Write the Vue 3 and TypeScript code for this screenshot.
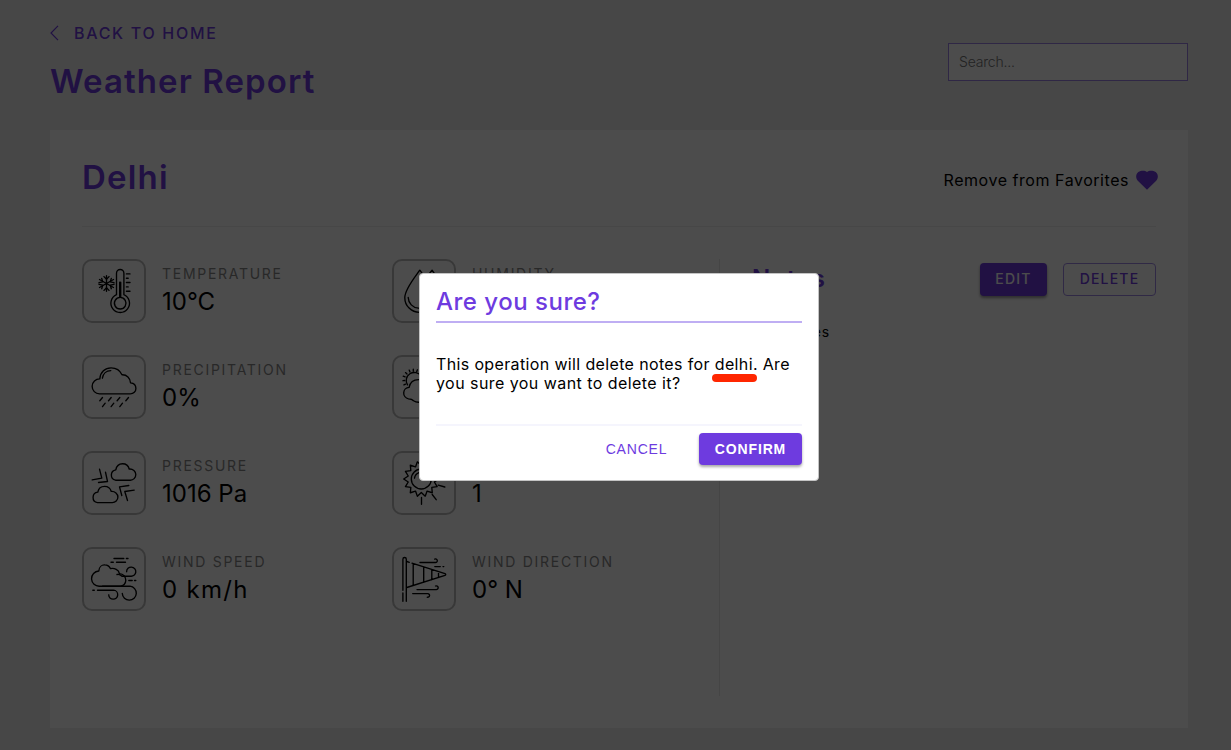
<script setup lang="ts">
interface Stat {
  key: string
  label: string
  value: string
  tracking?: number
  icon: string[]
}

function burst(cx: number, cy: number, outer: number, inner: number, points: number): string {
  const parts: string[] = []
  for (let i = 0; i < points * 2; i++) {
    const r = i % 2 === 0 ? outer : inner
    const a = (Math.PI * i) / points + Math.PI
    parts.push(`${(cx + r * Math.cos(a)).toFixed(2)} ${(cy + r * Math.sin(a)).toFixed(2)}`)
  }
  return `M${parts.join('L')}Z`
}

const stats: Stat[] = [
  {
    key: 'temperature',
    label: 'TEMPERATURE',
    value: '10°C',
    icon: [
      'M34 35.5V14a3.7 3.7 0 0 1 7.4 0v21.5a9.3 9.3 0 1 1-7.4 0Z',
      'M37.7 38.2a5.8 5.8 0 1 0 .01 0M37.2 23v15M38.2 23v15',
      'M43.9 14.7h3.6M43.9 19h1.8M43.9 23.3h3.6M43.9 27.700h1.800M43.900 32h3.600',
      'M24 16.500v15.600M17 20.300l14 8M17 28.300l14-8',
      'M21.500 17.400l2.500 2.600 2.500-2.600M21.500 31.200l2.500-2.600 2.500 2.600M16.500 23.500l3.700-.8-1-3.500M31.500 25.100l-3.700.9 1 3.500M19.200 29.500l1-3.500-3.700-.9M28.800 19.200l-1 3.500 3.700.8',
    ],
  },
  {
    key: 'humidity',
    label: 'HUMIDITY',
    value: '54%',
    icon: [
      'M27.300 11C22 18.500 12.300 30 12.300 38.500a14.700 14.700 0 0 0 29.400 0C41.700 30 33 18.500 27.300 11Z',
      'M15.700 38.300A11 11 0 0 0 26 49',
      'M36 15.500L39.600 11l4 6',
    ],
  },
  {
    key: 'precipitation',
    label: 'PRECIPITATION',
    value: '0%',
    icon: [
      'M17 38.700a7.500 7.500 0 0 1 .3-15C17.800 17 22.600 12.600 28.600 12.600c5 0 9 2.700 10.900 7 4.800-.2 8.300 3.300 8.500 8 3.300.3 5.400 2.700 5.400 5.600 0 3.100-2.400 5.500-5.600 5.500Z',
      'M19.900 23C20.500 18.500 24 15.500 28.300 15.400',
      'M20 42.300l-2.700 3.200M28.700 42.300L26 45.500M37.300 42.300l-2.700 3.200M46 42.300l-2.700 3.200M22.700 48l-2.700 3.400M31.300 48l-2.700 3.400M40 48l-2.700 3.400',
    ],
  },
  {
    key: 'cloud',
    label: 'CLOUD COVER',
    value: '0%',
    icon: [
      'M15 29.700a8 8 0 1 1 13.500-8.700',
      'M12.300 25.300l-1.800.2M12.600 21.700l-1.900-.7M14.500 18.800l-1.500-1.400M17.500 16.800l-.8-1.900M20.800 16v-2M24.200 16.500l.7-1.900M27 18.300l1.300-1.500M13 28.900l-1.600.8',
      'M21 45.500c-1.500-1.800-3.500-1.900-5-1.900a5.800 5.800 0 0 1 .6-11.500c1-4.800 4.400-7.600 9.400-7.600s9 3 10 7c5 0 9 3 9 8s-4 7.500-8 7.500H26c-2 0-3.500-.5-5-1.500Z',
    ],
  },
  {
    key: 'pressure',
    label: 'PRESSURE',
    value: '1016 Pa',
    icon: [
      'M33 29a5.300 5.300 0 0 1 .3-10.400c.7-3.600 3.300-6.100 6.700-6.100 3.500 0 6 2.200 6.700 5.300 3.800-.3 6.600 2.300 6.600 5.600S50.800 29 47.800 29Z',
      'M15 51.400a5.300 5.300 0 0 1 .3-10.500c.7-3.600 3.300-5.800 6.700-5.800 3.500 0 6 2.200 6.700 5.100 3.800-.3 6.700 2.400 6.700 5.600s-2.600 5.600-5.600 5.600Z',
      'M9.700 28.700l9.600-1.700L17 18M16 31.300l9-1L23 21M39.300 44.300L37 35.700l9.300-1.400M45 49.300l-2.700-9 9.400-1.300',
    ],
  },
  {
    key: 'uv',
    label: 'UV INDEX',
    value: '1',
    icon: [
      burst(28.8, 27.8, 17.6, 13.4, 14),
      'M38.800 27.800a10 10 0 1 1-20 0a10 10 0 1 1 20 0M22 27a7 7 0 0 1 4.500-5.600',
      'M45.700 34l6.600 1.800M39.700 43.300l4 5.200M29 46.300v6.700',
    ],
  },
  {
    key: 'wind-speed',
    label: 'WIND SPEED',
    value: '0 km/h',
    tracking: 1.3,
    icon: [
      'M17 39a7.600 7.600 0 0 1-.7-15.200c.3-4 3-6.300 6-6.100 2.600.1 4.600 1.400 5.600 3.700 4-.8 8.500 1 9 5 4 .3 6.400 3.400 6.400 6.600 0 3.500-2.500 6-5.600 6Z',
      'M34.500 27.300c2-.5 3.500.2 5 1.700h8.500a4.600 4.600 0 1 0-3.900-4.500',
      'M20 39h27.500a7 7 0 1 1-7.700 7.300M15 43h16a4.500 4.500 0 1 1-4.800 4.600M10.300 43h1.500',
      'M46.300 33.300h3.400M52 33.300h1.300M31.500 11.300h9.800M43.900 11.300h1.600M28.500 15h2.300M34 15h9',
    ],
  },
  {
    key: 'wind-direction',
    label: 'WIND DIRECTION',
    value: '0° N',
    icon: [
      'M10.400 43V12a1.700 1.700 0 0 1 3.400 0v42M10.400 45.800V54',
      'M14.300 14.300l2.500.8M19.500 16l33 10.500q1.500.8 0 1.600L14.300 40.300M20.700 16.500v21.500M31.200 19.700v15.300M39.300 22.300v10.200M46 24.500v5.800',
      'M27.500 15.300h15.500a1.800 1.800 0 1 0-.8-3.400M42.300 19.400h5.500M50.500 19.400h.8M24.500 42.400h19a1.900 1.900 0 1 0-.5-3.600M20.200 46.400h15a1.800 1.800 0 1 1-.5 3.500',
    ],
  },
]
</script>

<template>
  <div class="page">
    <header class="top">
      <div>
        <a class="back">
          <svg width="10" height="18" viewBox="0 0 10 18"><path d="M8 1.800L1 9l7 7.200" /></svg>
          <span>BACK TO HOME</span>
        </a>
        <h1>Weather Report</h1>
      </div>
      <div class="search">Search...</div>
    </header>

    <main class="card">
      <div class="card-head">
        <h2>Delhi</h2>
        <div class="favorite">
          <span>Remove from Favorites</span>
          <svg width="22" height="20" viewBox="0 0 22 20"><path d="M11 19.700L1.800 10.700C-.6 8-.3 4 2.300 2 5 .2 9 .2 11 1.900 13 .2 17 .2 19.700 2c2.600 2 2.900 6 .5 8.700Z" /></svg>
        </div>
      </div>
      <div class="card-body">
        <section class="stats">
          <div v-for="s in stats" :key="s.key" class="stat">
            <div class="tile">
              <svg width="60" height="60" viewBox="1.5 1.8 60 60">
                <path v-for="(d, i) in s.icon" :key="i" :d="d" />
              </svg>
            </div>
            <div class="reading">
              <span class="label">{{ s.label }}</span>
              <span class="value" :style="{ letterSpacing: (s.tracking ?? 0) + 'px' }">{{ s.value }}</span>
            </div>
          </div>
        </section>
        <section class="notes">
          <div class="notes-head">
            <h3>Notes</h3>
            <div class="actions">
              <button class="btn edit">EDIT</button>
              <button class="btn delete">DELETE</button>
            </div>
          </div>
          <p>Test notes</p>
        </section>
      </div>
    </main>

    <div class="overlay">
      <div class="modal">
        <h4>Are you sure?</h4>
        <p class="message">
          <span class="line">This operation will delete notes for <span class="city">delhi</span>. Are</span>
          <span class="line">you sure you want to delete it?</span>
        </p>
        <div class="modal-actions">
          <button class="cancel">CANCEL</button>
          <button class="confirm">CONFIRM</button>
        </div>
      </div>
    </div>
  </div>
</template>

<style>
body {
  margin: 0;
  overflow: hidden;
}
</style>

<style scoped>
* {
  box-sizing: border-box;
}
.page {
  height: 750px;
  padding: 0 43px 0 50px;
  background: #efefef;
  font-family: Inter, "Open Sans", sans-serif;
  color: #000;
  overflow: hidden;
}
h1, h2, h3, h4, p {
  margin: 0;
}
h1, h2, h3 {
  color: #6e3bdf;
  font-weight: 600;
}
button {
  font-family: Inter, sans-serif;
  border: 0;
  padding: 0;
}
.top {
  display: flex;
  justify-content: space-between;
  height: 130px;
}
.back {
  display: flex;
  align-items: center;
  gap: 14px;
  height: 20px;
  margin-top: 23px;
  color: #6e3bdf;
  font-size: 16px;
  font-weight: 500;
  letter-spacing: 1.700px;
}
.back svg {
  fill: none;
  stroke: #6e3bdf;
  stroke-width: 1.200;
}
h1 {
  margin-top: 18px;
  font-size: 33px;
  line-height: 40px;
  letter-spacing: 1.080px;
}
.search {
  width: 240px;
  height: 38px;
  margin-top: 43px;
  padding-left: 10px;
  border: 1px solid #9d84e6;
  background: #fff;
  color: #757575;
  font-size: 14px;
  font-weight: 300;
  line-height: 36px;
  letter-spacing: -0.200px;
}
.card {
  height: 598px;
  padding: 0 32px;
  background: #fff;
}
.card-head {
  display: flex;
  justify-content: space-between;
  align-items: center;
  height: 97px;
  border-bottom: 1px solid #efefef;
}
h2 {
  margin-top: -2px;
  font-size: 33px;
  letter-spacing: 1.200px;
}
.favorite {
  display: flex;
  align-items: center;
  gap: 7px;
  margin: 4px -2px 0 0;
  font-size: 16px;
  letter-spacing: 0.540px;
}
.favorite svg {
  fill: #6e3bdf;
}
.card-body {
  display: flex;
  height: 469px;
  padding-top: 32px;
}
.stats {
  display: grid;
  grid-template-columns: 310px 310px;
  grid-auto-rows: 64px;
  row-gap: 32px;
  width: 637px;
}
.stat {
  display: flex;
  gap: 16px;
}
.tile {
  flex: none;
  width: 64px;
  height: 64px;
  border: 2px solid #bdbdbd;
  border-radius: 10px;
}
.tile svg {
  display: block;
  fill: none;
  stroke: #000;
  stroke-width: 1.350;
  stroke-linejoin: round;
  stroke-linecap: round;
}
.reading {
  display: flex;
  flex-direction: column;
}
.label {
  margin-top: 6px;
  color: #888;
  font-size: 14px;
  line-height: 18px;
  letter-spacing: 1.720px;
}
.value {
  font-size: 24px;
  line-height: 38px;
}
.notes {
  flex: 1;
  border-left: 1px solid #e8e8e8;
  height: 437px;
  padding-left: 32px;
}
.notes-head {
  display: flex;
  justify-content: space-between;
  height: 57px;
}
h3 {
  margin-top: 3px;
  font-size: 24px;
  line-height: 33px;
  letter-spacing: 1.100px;
}
.notes p {
  font-size: 14px;
  line-height: 32px;
  letter-spacing: 0.950px;
}
.actions {
  display: flex;
  gap: 16px;
  padding-top: 4px;
}
.btn {
  height: 33px;
  padding-bottom: 2px;
  border-radius: 4px;
  font-size: 14px;
  font-weight: 500;
  letter-spacing: 1.200px;
}
.edit {
  width: 67px;
  background: #6e3bdf;
  color: #fff;
  box-shadow: 0 2px 3px rgba(0, 0, 0, 0.400);
}
.delete {
  width: 93px;
  border: 1px solid #a28be8;
  background: transparent;
  color: #6e3bdf;
}
.overlay {
  position: fixed;
  inset: 0;
  display: flex;
  justify-content: center;
  align-items: flex-start;
  padding: 273px 0 0 7px;
  background: rgba(0, 0, 0, 0.700);
}
.modal {
  width: 400px;
  height: 208px;
  padding: 0 16px;
  border: 1px solid #c4c4c4;
  border-radius: 4px;
  background: #fff;
}
h4 {
  height: 49px;
  border-bottom: 2px solid #bfaef3;
  color: #6e3bdf;
  font-size: 24px;
  font-weight: 500;
  line-height: 55px;
  letter-spacing: 0.500px;
}
.message {
  height: 103px;
  padding-top: 32px;
  border-bottom: 2px solid #f5f5fd;
  font-size: 16px;
  line-height: 19px;
  letter-spacing: 0.360px;
}
.line {
  display: block;
  white-space: nowrap;
}
.line + .line {
  letter-spacing: 0.440px;
}
.city {
  position: relative;
}
.city::after {
  content: "";
  position: absolute;
  left: -3px;
  top: 20px;
  width: 45px;
  height: 8px;
  border-radius: 4px;
  background: #ff2600;
}
.modal-actions {
  display: flex;
  justify-content: flex-end;
  padding-top: 7px;
}
.modal-actions button {
  height: 32px;
  font-family: "Liberation Sans", Arial, sans-serif;
  font-size: 14px;
}
.modal-actions .cancel {
  width: 93px;
  margin-right: 16px;
  background: transparent;
  color: #6e3bdf;
  letter-spacing: 0.800px;
}
.modal-actions .confirm {
  width: 103px;
  border-radius: 4px;
  background: #6e3bdf;
  color: #fff;
  font-weight: 700;
  letter-spacing: 0.850px;
  box-shadow: 0 2px 3px rgba(0, 0, 0, 0.350);
}
</style>
